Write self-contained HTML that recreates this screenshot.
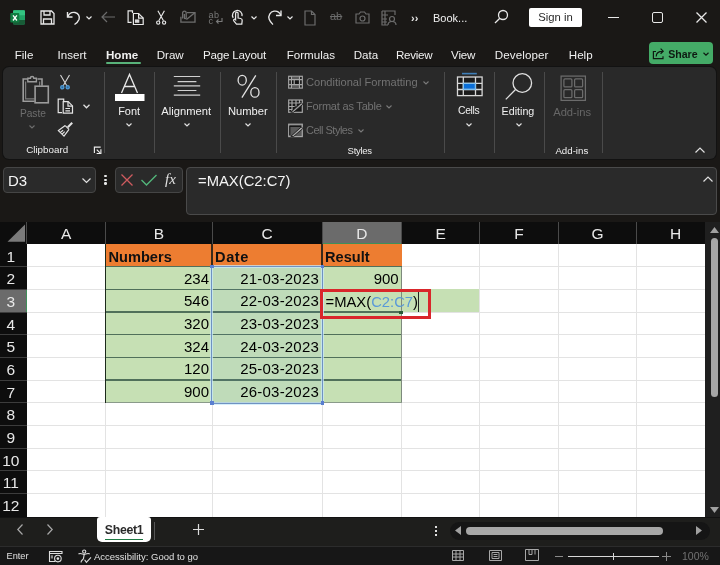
<!DOCTYPE html>
<html><head><meta charset="utf-8">
<style>
*{box-sizing:border-box;margin:0;padding:0}
html,body{width:720px;height:565px;overflow:hidden;background:#1a1816;font-family:"Liberation Sans",sans-serif;color:#fff}
.a{position:absolute}
.t{position:absolute;white-space:nowrap;line-height:1}
svg{position:absolute;overflow:visible}
#title{left:0;top:0;width:720px;height:68px;background:#1a1816}
#ribbon{left:3px;top:67px;width:713px;height:91.5px;background:#292929;border-radius:6px;box-shadow:0 0 0 1px #121212}
.sep{position:absolute;width:1px;background:#4a4a4a;top:72px;height:81px}
.rl{font-size:11.5px;color:#f0f0f0}
.gl{font-size:11.2px;color:#7a7a7a}
#grid{left:0;top:222px;width:705px;height:295px;background:#fff;overflow:hidden}
.ch{position:absolute;top:0;height:22px;background:#0c0c0c;color:#e8e8e8;font-size:15px;text-align:center;line-height:23px;border-right:1px solid #3a3a3a}
.rh{position:absolute;left:0;width:27px;background:#0c0c0c;color:#e8e8e8;font-size:15px;text-align:center;border-bottom:1px solid #3a3a3a}
.vl{position:absolute;top:22px;width:1px;height:273px;background:#dcdcdc}
.hl{position:absolute;left:27px;height:1px;width:680px;background:#dcdcdc}
.cell{position:absolute;font-size:15px;color:#000;white-space:nowrap;line-height:22px}
</style></head><body style="will-change:transform">
<div id="title" class="a"></div>

<!-- Title bar icons -->
<svg style="left:8px;top:8px" width="20" height="20" viewBox="8 8 20 20">
 <rect x="13" y="10.2" width="12" height="14.4" rx="1.3" fill="#21a366"/>
 <path d="M14.3 10.2h9.4a1.3 1.3 0 011.3 1.3v3.8H13v-3.8a1.3 1.3 0 011.3-1.3z" fill="#33c481"/>
 <path d="M13 20h12v3.3a1.3 1.3 0 01-1.3 1.3h-9.4a1.3 1.3 0 01-1.3-1.3z" fill="#185c37"/>
 <rect x="10.3" y="13" width="9" height="9.6" rx="1" fill="#107c41"/>
 <path d="M13 15.3l3.9 5.2M16.9 15.3L13 20.5" stroke="#fff" stroke-width="1.35"/>
</svg>
<svg style="left:40px;top:10px" width="15" height="15" viewBox="0 0 15 15" fill="none" stroke="#e8e8e8" stroke-width="1.3">
 <path d="M1 1h10.5l2.5 2.5V14H1z"/><path d="M4 1v4h6V1"/><path d="M3.5 14V9h8v5"/>
</svg>
<svg style="left:66px;top:10px" width="15" height="15" viewBox="0 0 15 15" fill="none" stroke="#e8e8e8" stroke-width="1.4">
 <path d="M1.5 2v5h5"/><path d="M1.8 6.8C3 3.5 6 2 9 2.5c3.5.7 5 4 4 7-1 2.5-3 4-4.5 5"/>
</svg>
<svg style="left:86px;top:15.5px" width="6" height="4" viewBox="0 0 6 4" fill="none" stroke="#e8e8e8" stroke-width="1.2"><path d="M0.5 0.5l2.5 2.5 2.5-2.5"/></svg>
<svg style="left:101px;top:11px" width="15" height="12" viewBox="0 0 15 12" fill="none" stroke="#6c6c6c" stroke-width="1.2"><path d="M14 6H1M6 1L1 6l5 5"/></svg>
<svg style="left:125px;top:8px" width="20" height="19" viewBox="125 8 20 19" fill="none" stroke="#e8e8e8" stroke-width="1.2">
 <path d="M131.6 22.4h-3.5V10.9h4.4v2.2"/><path d="M133.4 13.5h5.2l4.6 4.6v6.4h-9.8z"/><path d="M138.6 13.5v4.6h4.6"/><rect x="134.9" y="19.4" width="4.4" height="3.4" fill="#d8d8d8" stroke="none"/>
</svg>
<svg style="left:154px;top:9px" width="14" height="17" viewBox="154 9 14 17" fill="none" stroke="#e8e8e8" stroke-width="1.15">
 <path d="M157.9 10.8l5.6 9.9M164.4 10.8l-5.6 9.9"/><circle cx="158.2" cy="22.6" r="1.6"/><circle cx="164.1" cy="22.6" r="1.6"/>
</svg>
<svg style="left:178px;top:9px" width="19" height="15" viewBox="178 9 19 15" fill="none" stroke="#6e6e6e" stroke-width="1.3">
 <path d="M180.9 16.8v5.4h14.1V12.6h-8.2"/><path d="M186.4 19.6l8.4-6.8"/><path d="M182.6 18.6v-5.6a1.8 1.8 0 013.6 0v4.8a.9.9 0 01-1.8 0v-3.8"/>
</svg>
<div class="t" style="left:208.5px;top:10.6px;font-size:9px;color:#7a7a7a;letter-spacing:0.6px">ab</div>
<div class="t" style="left:208.5px;top:16.8px;font-size:9px;color:#7a7a7a">c</div>
<svg style="left:215px;top:18px" width="8" height="8" viewBox="0 0 8 8" fill="none" stroke="#7a7a7a" stroke-width="1.1"><path d="M7 0v3.5H1.5M3.5 1.5L1.5 3.5l2 2"/></svg>
<svg style="left:228px;top:8px" width="18" height="18" viewBox="228 8 18 18" fill="none" stroke="#e8e8e8" stroke-width="1.25">
 <path d="M233.2 17.8a4.8 4.8 0 118.8-1.6"/>
 <path d="M235.6 19.8v-6.3a1.25 1.25 0 012.5 0v4.5l2.6.5c1 .2 1.6 1 1.5 2l-.4 3.6h-5.3l-2.7-3.2a1 1 0 011.6-1.3z"/>
</svg>
<svg style="left:251px;top:15.5px" width="6" height="4" viewBox="0 0 6 4" fill="none" stroke="#e8e8e8" stroke-width="1.2"><path d="M0.5 0.5l2.5 2.5 2.5-2.5"/></svg>
<svg style="left:266px;top:9px" width="18" height="18" viewBox="266 9 18 18" fill="none" stroke="#e8e8e8" stroke-width="1.35">
 <path d="M281 10.5v5h-5"/><path d="M280.8 15.2c-1.3-3-4-4.4-6.8-4-3.8.6-6 4.5-4.8 8 .7 2 2.3 3.6 3.8 5.3"/>
</svg>
<svg style="left:287px;top:15.5px" width="6" height="4" viewBox="0 0 6 4" fill="none" stroke="#e8e8e8" stroke-width="1.2"><path d="M0.5 0.5l2.5 2.5 2.5-2.5"/></svg>
<svg style="left:304px;top:10px" width="12" height="16" viewBox="0 0 12 16" fill="none" stroke="#6c6c6c" stroke-width="1.2"><path d="M1 1h6.5L11 4.5V15H1z"/><path d="M7.5 1v3.5H11"/></svg>
<div class="t" style="left:330px;top:11px;font-size:11px;color:#6c6c6c;text-decoration:line-through">ab</div>
<svg style="left:355px;top:11px" width="15" height="13" viewBox="0 0 15 13" fill="none" stroke="#6c6c6c" stroke-width="1.2"><path d="M1 3h3l1.5-2h4L11 3h3v9H1z"/><circle cx="7.5" cy="7.5" r="2.5"/></svg>
<svg style="left:381px;top:10px" width="16" height="16" viewBox="0 0 16 16" fill="none" stroke="#6c6c6c" stroke-width="1.2"><path d="M1 1h13v4M1 1v14h6M4 1v14M1 5h6M1 9h5M1 12h5"/><circle cx="11" cy="9" r="2.5"/><path d="M7 15c0-2.5 2-3.5 4-3.5s4 1 4 3.5"/></svg>
<div class="t" style="left:411px;top:12.5px;font-size:11px;color:#e8e8e8;font-weight:bold">&#8250;&#8250;</div>
<div class="t" style="left:433px;top:12.6px;font-size:11px;color:#f0f0f0">Book...</div>
<svg style="left:494px;top:9px" width="15" height="15" viewBox="0 0 15 15" fill="none" stroke="#e8e8e8" stroke-width="1.3"><circle cx="9" cy="6" r="4.5"/><path d="M5.8 9.2L1 14"/></svg>
<div class="a" style="left:529px;top:8px;width:53px;height:19px;background:#fff;border-radius:2px"></div>
<div class="t" style="left:538.2px;top:12.3px;font-size:11.3px;color:#2a2a2a">Sign in</div>
<div class="a" style="left:608px;top:17px;width:11px;height:1.3px;background:#e8e8e8"></div>
<div class="a" style="left:652px;top:12px;width:11px;height:11px;border:1.3px solid #e8e8e8;border-radius:2px"></div>
<svg style="left:696px;top:12px" width="11" height="11" viewBox="0 0 11 11" fill="none" stroke="#e8e8e8" stroke-width="1.3"><path d="M0.5 0.5l10 10M10.5 0.5l-10 10"/></svg>

<!-- Menu tabs -->
<div class="t" style="left:14.7px;top:48.9px;font-size:11.6px;letter-spacing:0px;color:#f0f0f0;">File</div>
<div class="t" style="left:57.5px;top:48.9px;font-size:11.6px;letter-spacing:0px;color:#f0f0f0;">Insert</div>
<div class="t" style="left:106.0px;top:48.9px;font-size:11.6px;letter-spacing:0px;color:#f0f0f0;font-weight:bold;">Home</div>
<div class="t" style="left:156.7px;top:48.9px;font-size:11.6px;letter-spacing:0px;color:#f0f0f0;">Draw</div>
<div class="t" style="left:203.0px;top:48.9px;font-size:11.6px;letter-spacing:-0.2px;color:#f0f0f0;">Page Layout</div>
<div class="t" style="left:286.7px;top:48.9px;font-size:11.6px;letter-spacing:0px;color:#f0f0f0;">Formulas</div>
<div class="t" style="left:353.7px;top:48.9px;font-size:11.6px;letter-spacing:0px;color:#f0f0f0;">Data</div>
<div class="t" style="left:396.0px;top:48.9px;font-size:11.6px;letter-spacing:-0.3px;color:#f0f0f0;">Review</div>
<div class="t" style="left:451.1px;top:48.9px;font-size:11.6px;letter-spacing:-0.2px;color:#f0f0f0;">View</div>
<div class="t" style="left:494.8px;top:48.9px;font-size:11.6px;letter-spacing:0.1px;color:#f0f0f0;">Developer</div>
<div class="t" style="left:568.8px;top:48.9px;font-size:11.6px;letter-spacing:0px;color:#f0f0f0;">Help</div>
<div class="a" style="left:106px;top:62.3px;width:35px;height:2px;background:#58b27a;border-radius:1px"></div>
<div class="a" style="left:649px;top:42px;width:63.5px;height:22.2px;background:#44ab67;border-radius:4px"></div>
<svg style="left:650px;top:45px" width="16" height="16" viewBox="650 45 16 16" fill="none" stroke="#0e1a12" stroke-width="1.2"><path d="M656 51.5h-2.6v7.2h9.6v-2.4"/><path d="M656.2 56.5c0-3.5 2.5-5.2 6.3-5.2M660.6 48.6l2.6 2.6-2.6 2.6"/></svg>
<div class="t" style="left:668.2px;top:48.5px;font-size:10.6px;font-weight:bold;color:#0e1a12">Share</div>
<svg style="left:703px;top:51.5px" width="6" height="4" viewBox="0 0 6 4" fill="none" stroke="#0e1a12" stroke-width="1.2"><path d="M0.5 0.8l2.5 2.3 2.5-2.3"/></svg>

<!-- Ribbon -->
<div id="ribbon" class="a"></div>

<!-- Clipboard -->
<svg style="left:22px;top:74px" width="28" height="30" viewBox="0 0 28 30" fill="none" stroke="#9c9c9c" stroke-width="1.6">
 <path d="M5.5 5H1.2v22.2h11.5"/><path d="M15.5 5h4.5v6.8"/>
 <path d="M5.8 7.8V4.2h2.6a1.7 1.7 0 013.4 0h2.6v3.6z" stroke-width="1.4"/>
 <path d="M3.6 7.5v17.3h9.1M17.6 7.5v4.3" stroke="#7c7c7c" stroke-width="1.2"/>
 <rect x="13.1" y="12.2" width="13.2" height="16.6"/>
</svg>
<div class="t gl" style="left:19.9px;top:109.17px;font-size:10.2px;color:#6e6e6e;">Paste</div>
<svg style="left:29px;top:125px" width="6" height="4" viewBox="0 0 6 4" fill="none" stroke="#6e6e6e" stroke-width="1.1"><path d="M0.5 0.5l2.5 2.5 2.5-2.5"/></svg>
<svg style="left:58px;top:74px" width="14" height="16" viewBox="0 0 14 16" fill="none" stroke-width="1.1">
 <path d="M2.5 1l6.3 10.8M11.5 1L5.2 11.8" stroke="#d8d8d8"/><circle cx="4.3" cy="13.3" r="1.6" stroke="#4f9bd8" fill="#2f6a9a" stroke-width="1.3"/><circle cx="9.7" cy="13.3" r="1.6" stroke="#4f9bd8" fill="#2f6a9a" stroke-width="1.3"/>
</svg>
<svg style="left:57px;top:98px" width="17" height="16" viewBox="0 0 17 16" fill="none" stroke="#e4e4e4" stroke-width="1.2">
 <path d="M5 14.6H1.2V1.2h5.5v2"/><path d="M6.2 3.6h5l4.3 4.3v7.2H6.2z"/><path d="M11 3.6v4.5h4.5"/><path d="M8.4 10.5h4.6M8.4 12.8h4.6"/>
</svg>
<svg style="left:83px;top:104px" width="7" height="5" viewBox="0 0 7 5" fill="none" stroke="#e0e0e0" stroke-width="1.3"><path d="M0.5 0.8l3 3 3-3"/></svg>
<svg style="left:57px;top:121px" width="17" height="16" viewBox="0 0 17 16" fill="none" stroke="#e4e4e4" stroke-width="1.2">
 <path d="M15.2 1.8l-4.4 4.4" stroke-width="2"/><path d="M8.2 4.6l3.8 3.8"/><path d="M8.2 4.6L1.4 9.6l5.6 5.6 5-6.8"/><path d="M3.4 11.4l2.7-2.2M5.1 13.2l2.6-2.6"/>
</svg>
<div class="t rl" style="left:26.2px;top:145.3px;font-size:9.8px;">Clipboard</div>
<svg style="left:90px;top:142px" width="16" height="16" viewBox="90 142 16 16" fill="none" stroke="#ececec" stroke-width="1.15">
 <path d="M94.4 153V147.1h6.3"/><path d="M96.7 149.6l3.4 3.3"/><path d="M96.6 153.5h4.3v-4.3"/>
</svg>
<div class="sep" style="left:104px"></div>
<!-- Font -->
<svg style="left:115px;top:74px" width="30" height="28" viewBox="0 0 30 28" fill="none" stroke="#e8e8e8" stroke-width="1.3">
 <path d="M6.5 19L14.5 0.5 22.5 19M9.5 12.5h10"/><rect x="0" y="20" width="29.5" height="7" fill="#fff" stroke="none"/>
</svg>
<div class="t rl" style="left:118.2px;top:105.73px;font-size:10.95px;">Font</div>
<svg style="left:126px;top:123px" width="6" height="4" viewBox="0 0 6 4" fill="none" stroke="#e0e0e0" stroke-width="1.2"><path d="M0.5 0.5l2.5 2.5 2.5-2.5"/></svg>
<div class="sep" style="left:154px"></div>
<!-- Alignment -->
<svg style="left:173px;top:75px" width="28" height="22" viewBox="0 0 28 22" fill="none" stroke="#d0d0d0" stroke-width="1.15">
 <path d="M0.8 1.5h26.4M4.6 6.6h18.8M0.8 10.9h26.4M4.6 15.5h18.8M0.8 20.1h26.4"/>
</svg>
<div class="t rl" style="left:161.3px;top:105.52px;font-size:11.2px;">Alignment</div>
<svg style="left:184px;top:123px" width="6" height="4" viewBox="0 0 6 4" fill="none" stroke="#e0e0e0" stroke-width="1.2"><path d="M0.5 0.5l2.5 2.5 2.5-2.5"/></svg>
<div class="sep" style="left:220px"></div>
<!-- Number -->
<svg style="left:236px;top:74px" width="24" height="25" viewBox="236 74 24 25" fill="none" stroke="#e2e2e2" stroke-width="1.3">
 <ellipse cx="242.2" cy="80.2" rx="4.1" ry="4.9"/><ellipse cx="254.9" cy="92.4" rx="4.1" ry="4.8"/><path d="M255.8 75.3L241.9 97.6"/>
</svg>
<div class="t rl" style="left:228.0px;top:105.52px;font-size:11.2px;">Number</div>
<svg style="left:245px;top:123px" width="6" height="4" viewBox="0 0 6 4" fill="none" stroke="#e0e0e0" stroke-width="1.2"><path d="M0.5 0.5l2.5 2.5 2.5-2.5"/></svg>
<div class="sep" style="left:276px"></div>
<!-- Styles -->
<svg style="left:286px;top:74px" width="20" height="17" viewBox="286 74 20 17" fill="none" stroke="#a6a6a6" stroke-width="1.2">
 <rect x="288.7" y="76.3" width="13.6" height="11.8" fill="#141414"/>
 <rect x="291.6" y="76.8" width="7.6" height="2.6" fill="#5a5a5a" stroke="none"/><rect x="291.6" y="85" width="7.6" height="2.6" fill="#5a5a5a" stroke="none"/>
 <path d="M288.7 79.7h13.6M288.7 84.7h13.6M291.4 76.3v11.8M299.5 76.3v11.8M294.2 79.7v5"/>
</svg>
<div class="t gl" style="left:306px;top:77.2px;font-size:11.1px;color:#727272">Conditional Formatting</div>
<svg style="left:423px;top:81px" width="6" height="4" viewBox="0 0 6 4" fill="none" stroke="#7a7a7a" stroke-width="1.1"><path d="M0.5 0.5l2.5 2.5 2.5-2.5"/></svg>
<svg style="left:286px;top:97px" width="20" height="18" viewBox="286 97 20 18" fill="none" stroke="#a6a6a6" stroke-width="1.2">
 <rect x="288.7" y="100" width="13.6" height="12.3" fill="#161616"/>
 <path d="M288.7 103h13.6M288.7 106.5h6M288.7 109.5h3M292 100v12.3M296 100v6.5M299.5 100v3"/>
 <path d="M290.8 112.2l10.5-9.5 1.6 1.6-9.3 8z" fill="#9a9a9a" stroke="#1a1a1a" stroke-width="0.9"/>
</svg>
<div class="t gl" style="left:306px;top:100.9px;font-size:11px;letter-spacing:-0.2px;color:#727272">Format as Table</div>
<svg style="left:386px;top:105px" width="6" height="4" viewBox="0 0 6 4" fill="none" stroke="#7a7a7a" stroke-width="1.1"><path d="M0.5 0.5l2.5 2.5 2.5-2.5"/></svg>
<svg style="left:286px;top:121px" width="20" height="18" viewBox="286 121 20 18" fill="none" stroke="#a6a6a6" stroke-width="1.2">
 <rect x="288.7" y="124.2" width="13.6" height="12.4" fill="#5a5a5a"/>
 <path d="M289.5 126.3h11.5" stroke="#141414" stroke-width="1.3"/><path d="M289.8 126.3v9" stroke="#141414" stroke-width="1.1"/>
 <path d="M290.8 136.4l10.5-9.5 1.6 1.6-9.3 8z" fill="#a8a8a8" stroke="#1a1a1a" stroke-width="0.9"/>
</svg>
<div class="t gl" style="left:306px;top:124.8px;font-size:11px;letter-spacing:-0.5px;color:#727272">Cell Styles</div>
<svg style="left:358px;top:129px" width="6" height="4" viewBox="0 0 6 4" fill="none" stroke="#7a7a7a" stroke-width="1.1"><path d="M0.5 0.5l2.5 2.5 2.5-2.5"/></svg>
<div class="t rl" style="left:347.6px;top:145.76px;font-size:9.5px;letter-spacing:-0.3px;">Styles</div>
<div class="sep" style="left:444px"></div>
<!-- Cells -->
<svg style="left:452px;top:70px" width="36" height="30" viewBox="452 70 36 30" fill="none" stroke="#d8d8d8" stroke-width="1.3">
 <rect x="457.5" y="77" width="24.6" height="18.6" fill="#1b1b1b"/>
 <path d="M462 73.6h14.8" stroke="#3f7fb8" stroke-width="1.6"/>
 <rect x="463.3" y="83.3" width="12.2" height="6.2" fill="#0a6fd8" stroke="none"/>
 <path d="M457.5 83.3h24.6M457.5 89.5h24.6M463.3 77v18.6M475.5 77v18.6"/>
 <rect x="463.3" y="83.3" width="12.2" height="6.2" stroke="#7cc0f0" stroke-width="1.1"/>
</svg>
<div class="t rl" style="left:458.1px;top:106.20px;font-size:10.4px;letter-spacing:-0.4px;">Cells</div>
<svg style="left:466px;top:123px" width="6" height="4" viewBox="0 0 6 4" fill="none" stroke="#e0e0e0" stroke-width="1.2"><path d="M0.5 0.5l2.5 2.5 2.5-2.5"/></svg>
<div class="sep" style="left:494px"></div>
<!-- Editing -->
<svg style="left:500px;top:68px" width="40" height="34" viewBox="500 68 40 34" fill="none" stroke="#e0e0e0" stroke-width="1.3">
 <circle cx="522.3" cy="83" r="9.3"/><path d="M515.3 89.7L505.8 99.4"/>
</svg>
<div class="t rl" style="left:501.6px;top:105.94px;font-size:10.7px;">Editing</div>
<svg style="left:516px;top:123px" width="6" height="4" viewBox="0 0 6 4" fill="none" stroke="#e0e0e0" stroke-width="1.2"><path d="M0.5 0.5l2.5 2.5 2.5-2.5"/></svg>
<div class="sep" style="left:544px"></div>
<!-- Add-ins -->
<svg style="left:555px;top:70px" width="36" height="36" viewBox="555 70 36 36" fill="none" stroke="#6c6c6c" stroke-width="1.25">
 <rect x="561.1" y="76.1" width="24.3" height="24.3"/><rect x="563.9" y="78.9" width="8" height="8" rx="1"/><rect x="574.6" y="78.9" width="8" height="8" rx="1"/><rect x="563.9" y="89.7" width="8" height="8" rx="1"/><rect x="574.6" y="89.7" width="8" height="8" rx="1"/>
</svg>
<div class="t gl" style="left:553.2px;top:107.22px;font-size:11.2px;color:#666">Add-ins</div>
<div class="t rl" style="left:555.4px;top:145.79px;font-size:9.7px">Add-ins</div>
<div class="sep" style="left:602px"></div>
<svg style="left:695px;top:147px" width="10" height="6" viewBox="0 0 10 6" fill="none" stroke="#e0e0e0" stroke-width="1.2"><path d="M0.5 5.5l4.5-4.5 4.5 4.5"/></svg>

<!-- Formula bar -->
<div class="a" style="left:3px;top:167px;width:93px;height:26px;background:#2a2a2a;border:1px solid #454545;border-radius:4px"></div>
<div class="t" style="left:8px;top:173px;font-size:15px;color:#f4f4f4">D3</div>
<svg style="left:82px;top:178px" width="9" height="5" viewBox="0 0 9 5" fill="none" stroke="#e0e0e0" stroke-width="1.2"><path d="M0.5 0.5l4 4 4-4"/></svg>
<div class="a" style="left:104.4px;top:174.8px;width:2.4px;height:2.4px;background:#e8e8e8;border-radius:1.2px"></div>
<div class="a" style="left:104.4px;top:178.6px;width:2.4px;height:2.4px;background:#e8e8e8;border-radius:1.2px"></div>
<div class="a" style="left:104.4px;top:182.3px;width:2.4px;height:2.4px;background:#e8e8e8;border-radius:1.2px"></div>
<div class="a" style="left:115px;top:167px;width:68px;height:26px;background:#2a2a2a;border:1px solid #454545;border-radius:4px"></div>
<svg style="left:121px;top:174px" width="12" height="12" viewBox="0 0 12 12" fill="none" stroke="#cf5b5f" stroke-width="1.25"><path d="M0.5 0.5l11 11M11.5 0.5l-11 11"/></svg>
<svg style="left:141px;top:174px" width="16" height="12" viewBox="0 0 16 12" fill="none" stroke="#52b57a" stroke-width="1.35"><path d="M0.5 6l5 5 10-10"/></svg>
<div class="t" style="left:165px;top:172px;font-size:15px;color:#e0e0e0;font-family:'Liberation Serif',serif;font-style:italic">fx</div>
<div class="a" style="left:186px;top:167px;width:531px;height:48px;background:#2a2a2a;border:1px solid #4a4a4a;border-radius:4px"></div>
<div class="t" style="left:198px;top:174px;font-size:14.8px;color:#f4f4f4">=MAX(C2:C7)</div>
<svg style="left:703px;top:176px" width="10" height="6" viewBox="0 0 10 6" fill="none" stroke="#e0e0e0" stroke-width="1.2"><path d="M0.5 5.5l4.5-4.5 4.5 4.5"/></svg>
<div class="a" style="left:27px;top:244px;width:678px;height:273px;background:#fff"></div>
<div class="a" style="left:105.0px;top:244px;width:1px;height:273px;background:#e3e3e3"></div>
<div class="a" style="left:211.5px;top:244px;width:1px;height:273px;background:#e3e3e3"></div>
<div class="a" style="left:321.5px;top:244px;width:1px;height:273px;background:#e3e3e3"></div>
<div class="a" style="left:401.2px;top:244px;width:1px;height:273px;background:#e3e3e3"></div>
<div class="a" style="left:479.0px;top:244px;width:1px;height:273px;background:#e3e3e3"></div>
<div class="a" style="left:558.1px;top:244px;width:1px;height:273px;background:#e3e3e3"></div>
<div class="a" style="left:635.9px;top:244px;width:1px;height:273px;background:#e3e3e3"></div>
<div class="a" style="left:27px;top:266.17px;width:678px;height:1px;background:#e3e3e3"></div>
<div class="a" style="left:27px;top:288.83px;width:678px;height:1px;background:#e3e3e3"></div>
<div class="a" style="left:27px;top:311.50px;width:678px;height:1px;background:#e3e3e3"></div>
<div class="a" style="left:27px;top:334.17px;width:678px;height:1px;background:#e3e3e3"></div>
<div class="a" style="left:27px;top:356.84px;width:678px;height:1px;background:#e3e3e3"></div>
<div class="a" style="left:27px;top:379.50px;width:678px;height:1px;background:#e3e3e3"></div>
<div class="a" style="left:27px;top:402.17px;width:678px;height:1px;background:#e3e3e3"></div>
<div class="a" style="left:27px;top:424.84px;width:678px;height:1px;background:#e3e3e3"></div>
<div class="a" style="left:27px;top:447.50px;width:678px;height:1px;background:#e3e3e3"></div>
<div class="a" style="left:27px;top:470.17px;width:678px;height:1px;background:#e3e3e3"></div>
<div class="a" style="left:27px;top:492.84px;width:678px;height:1px;background:#e3e3e3"></div>
<div class="a" style="left:0;top:222px;width:705px;height:22px;background:#0d0d0d"></div>
<div class="a" style="left:0;top:244px;width:27px;height:273px;background:#0d0d0d"></div>
<div class="a" style="left:322px;top:222px;width:79.7px;height:22px;background:#6b6b6b"></div>
<div class="a" style="left:322px;top:242.5px;width:79.7px;height:1.5px;background:#3f8f5a"></div>
<div class="a" style="left:0;top:289.33px;width:27px;height:22.67px;background:#6b6b6b"></div>
<div class="a" style="left:25.5px;top:289.33px;width:1.5px;height:22.67px;background:#3f8f5a"></div>
<div class="a" style="left:105.0px;top:222px;width:1px;height:22px;background:#4a4a4a"></div>
<div class="a" style="left:211.5px;top:222px;width:1px;height:22px;background:#4a4a4a"></div>
<div class="a" style="left:321.5px;top:222px;width:1px;height:22px;background:#4a4a4a"></div>
<div class="a" style="left:401.2px;top:222px;width:1px;height:22px;background:#4a4a4a"></div>
<div class="a" style="left:479.0px;top:222px;width:1px;height:22px;background:#4a4a4a"></div>
<div class="a" style="left:558.1px;top:222px;width:1px;height:22px;background:#4a4a4a"></div>
<div class="a" style="left:635.9px;top:222px;width:1px;height:22px;background:#4a4a4a"></div>
<div class="a" style="left:0;top:266.17px;width:27px;height:1px;background:#3c3c3c"></div>
<div class="a" style="left:0;top:288.83px;width:27px;height:1px;background:#3c3c3c"></div>
<div class="a" style="left:0;top:311.50px;width:27px;height:1px;background:#3c3c3c"></div>
<div class="a" style="left:0;top:334.17px;width:27px;height:1px;background:#3c3c3c"></div>
<div class="a" style="left:0;top:356.84px;width:27px;height:1px;background:#3c3c3c"></div>
<div class="a" style="left:0;top:379.50px;width:27px;height:1px;background:#3c3c3c"></div>
<div class="a" style="left:0;top:402.17px;width:27px;height:1px;background:#3c3c3c"></div>
<div class="a" style="left:0;top:424.84px;width:27px;height:1px;background:#3c3c3c"></div>
<div class="a" style="left:0;top:447.50px;width:27px;height:1px;background:#3c3c3c"></div>
<div class="a" style="left:0;top:470.17px;width:27px;height:1px;background:#3c3c3c"></div>
<div class="a" style="left:0;top:492.84px;width:27px;height:1px;background:#3c3c3c"></div>
<svg style="left:7px;top:224px" width="19" height="19" viewBox="0 0 19 19"><path d="M18 0.5V17.8H0.5z" fill="#7a7a7a"/></svg>
<div class="a" style="left:26px;top:222px;width:1px;height:22px;background:#4a4a4a"></div>
<div class="t" style="left:46.2px;width:40px;text-align:center;top:225.8px;font-size:15.5px;color:#e8e8e8">A</div>
<div class="t" style="left:138.8px;width:40px;text-align:center;top:225.8px;font-size:15.5px;color:#e8e8e8">B</div>
<div class="t" style="left:247.0px;width:40px;text-align:center;top:225.8px;font-size:15.5px;color:#e8e8e8">C</div>
<div class="t" style="left:341.9px;width:40px;text-align:center;top:225.8px;font-size:15.5px;color:#e8e8e8">D</div>
<div class="t" style="left:420.6px;width:40px;text-align:center;top:225.8px;font-size:15.5px;color:#e8e8e8">E</div>
<div class="t" style="left:499.0px;width:40px;text-align:center;top:225.8px;font-size:15.5px;color:#e8e8e8">F</div>
<div class="t" style="left:577.5px;width:40px;text-align:center;top:225.8px;font-size:15.5px;color:#e8e8e8">G</div>
<div class="t" style="left:655.7px;width:40px;text-align:center;top:225.8px;font-size:15.5px;color:#e8e8e8">H</div>
<div class="t" style="left:-9.2px;width:40px;text-align:center;top:248.5px;font-size:15.5px;color:#e8e8e8">1</div>
<div class="t" style="left:-9.2px;width:40px;text-align:center;top:271.2px;font-size:15.5px;color:#e8e8e8">2</div>
<div class="t" style="left:-9.2px;width:40px;text-align:center;top:293.8px;font-size:15.5px;color:#e8e8e8">3</div>
<div class="t" style="left:-9.2px;width:40px;text-align:center;top:316.5px;font-size:15.5px;color:#e8e8e8">4</div>
<div class="t" style="left:-9.2px;width:40px;text-align:center;top:339.2px;font-size:15.5px;color:#e8e8e8">5</div>
<div class="t" style="left:-9.2px;width:40px;text-align:center;top:361.8px;font-size:15.5px;color:#e8e8e8">6</div>
<div class="t" style="left:-9.2px;width:40px;text-align:center;top:384.5px;font-size:15.5px;color:#e8e8e8">7</div>
<div class="t" style="left:-9.2px;width:40px;text-align:center;top:407.2px;font-size:15.5px;color:#e8e8e8">8</div>
<div class="t" style="left:-9.2px;width:40px;text-align:center;top:429.8px;font-size:15.5px;color:#e8e8e8">9</div>
<div class="t" style="left:-9.2px;width:40px;text-align:center;top:452.5px;font-size:15.5px;color:#e8e8e8">10</div>
<div class="t" style="left:-9.2px;width:40px;text-align:center;top:475.2px;font-size:15.5px;color:#e8e8e8">11</div>
<div class="t" style="left:-9.2px;width:40px;text-align:center;top:497.8px;font-size:15.5px;color:#e8e8e8">12</div>
<div class="a" style="left:105.5px;top:244.00px;width:296.2px;height:22.67px;background:#ed7d31"></div>
<div class="a" style="left:105.5px;top:266.67px;width:296.2px;height:136.00px;background:#c6e0b4"></div>
<div class="a" style="left:401.7px;top:289.33px;width:77.8px;height:22.67px;background:#c6e0b4"></div>
<div class="a" style="left:105.5px;top:266.07px;width:296.2px;height:1.4px;background:#50705a"></div>
<div class="a" style="left:105.5px;top:288.73px;width:296.2px;height:1.4px;background:#50705a"></div>
<div class="a" style="left:105.5px;top:311.40px;width:296.2px;height:1.4px;background:#50705a"></div>
<div class="a" style="left:105.5px;top:334.07px;width:296.2px;height:1.4px;background:#50705a"></div>
<div class="a" style="left:105.5px;top:356.74px;width:296.2px;height:1.4px;background:#50705a"></div>
<div class="a" style="left:105.5px;top:379.40px;width:296.2px;height:1.4px;background:#50705a"></div>
<div class="a" style="left:104.8px;top:244.00px;width:1.2px;height:158.67px;background:#1c2a1c"></div>
<div class="a" style="left:211.25px;top:244.00px;width:1.5px;height:22.67px;background:#3a2a1a"></div>
<div class="a" style="left:321.25px;top:244.00px;width:1.5px;height:22.67px;background:#3a2a1a"></div>
<div class="a" style="left:400.5px;top:266.67px;width:1.5px;height:136px;background:#7d8a7d"></div>
<div class="a" style="left:105.5px;top:401.67px;width:296.2px;height:1.5px;background:#8a9a8a"></div>
<div class="a" style="left:212px;top:266.67px;width:110px;height:136px;background:rgba(100,150,255,0.07)"></div><div class="a" style="left:211px;top:265.9px;width:112px;height:138px;border:1.5px solid #6f92c2;box-shadow:0 0 0 1px rgba(200,232,248,0.75),inset 0 0 0 1px rgba(200,232,248,0.75)"></div>
<div class="a" style="left:210.00px;top:264.85px;width:3.5px;height:3.5px;background:#5a7fd0"></div><div class="a" style="left:320.50px;top:264.85px;width:3.5px;height:3.5px;background:#5a7fd0"></div><div class="a" style="left:210.00px;top:401.35px;width:3.5px;height:3.5px;background:#5a7fd0"></div><div class="a" style="left:320.50px;top:401.35px;width:3.5px;height:3.5px;background:#5a7fd0"></div>
<div class="t" style="left:108.5px;top:249.5px;font-size:14.6px;color:#111;font-weight:bold;">Numbers</div>
<div class="t" style="left:215.0px;top:249.5px;font-size:14.6px;letter-spacing:0.6px;color:#111;font-weight:bold;">Date</div>
<div class="t" style="left:325.0px;top:249.5px;font-size:14.6px;color:#111;font-weight:bold;">Result</div>
<div class="t" style="left:105.5px;width:103.5px;text-align:right;top:270.7px;font-size:15px;color:#000;">234</div>
<div class="t" style="left:212.0px;width:107.0px;text-align:right;top:270.7px;font-size:15px;letter-spacing:0.2px;color:#000;">21-03-2023</div>
<div class="t" style="left:105.5px;width:103.5px;text-align:right;top:293.3px;font-size:15px;color:#000;">546</div>
<div class="t" style="left:212.0px;width:107.0px;text-align:right;top:293.3px;font-size:15px;letter-spacing:0.2px;color:#000;">22-03-2023</div>
<div class="t" style="left:105.5px;width:103.5px;text-align:right;top:316.0px;font-size:15px;color:#000;">320</div>
<div class="t" style="left:212.0px;width:107.0px;text-align:right;top:316.0px;font-size:15px;letter-spacing:0.2px;color:#000;">23-03-2023</div>
<div class="t" style="left:105.5px;width:103.5px;text-align:right;top:338.7px;font-size:15px;color:#000;">324</div>
<div class="t" style="left:212.0px;width:107.0px;text-align:right;top:338.7px;font-size:15px;letter-spacing:0.2px;color:#000;">24-03-2023</div>
<div class="t" style="left:105.5px;width:103.5px;text-align:right;top:361.3px;font-size:15px;color:#000;">120</div>
<div class="t" style="left:212.0px;width:107.0px;text-align:right;top:361.3px;font-size:15px;letter-spacing:0.2px;color:#000;">25-03-2023</div>
<div class="t" style="left:105.5px;width:103.5px;text-align:right;top:384.0px;font-size:15px;color:#000;">900</div>
<div class="t" style="left:212.0px;width:107.0px;text-align:right;top:384.0px;font-size:15px;letter-spacing:0.2px;color:#000;">26-03-2023</div>
<div class="t" style="left:322.0px;width:76.7px;text-align:right;top:270.7px;font-size:15px;color:#000;">900</div>
<div class="t" style="left:325.5px;top:294.8px;font-size:14.8px;color:#000">=MAX(<span style="color:#5a9ad8">C2:C7</span>)</div>
<div class="a" style="left:418px;top:292px;width:1px;height:20px;background:#222"></div>
<div class="a" style="left:320.2px;top:288.6px;width:110.8px;height:30px;border:3.3px solid #d9262b"></div>
<div class="a" style="left:399px;top:310.5px;width:3.5px;height:3.5px;background:#2b5a36"></div>

<!-- sheet tabs bar -->
<div class="a" style="left:0;top:517px;width:720px;height:29px;background:#1e1e1c;border-top:1px solid #121212"></div>
<svg style="left:17px;top:524px" width="6" height="11" viewBox="0 0 6 11" fill="none" stroke="#a8a8a8" stroke-width="1.2"><path d="M5.5 0.5L0.8 5.5l4.7 5"/></svg>
<svg style="left:47px;top:524px" width="6" height="11" viewBox="0 0 6 11" fill="none" stroke="#a8a8a8" stroke-width="1.2"><path d="M0.5 0.5l4.7 5-4.7 5"/></svg>
<div class="a" style="left:97.2px;top:517.3px;width:54.3px;height:24.9px;background:#fff;border-radius:3px 3px 5px 5px"></div>
<div class="t" style="left:104.8px;top:523.9px;font-size:12.3px;color:#2a2a2a;font-weight:bold;letter-spacing:-0.3px">Sheet1</div>
<div class="a" style="left:105px;top:538.5px;width:38px;height:1.5px;background:#1d7a43"></div>
<div class="a" style="left:154px;top:522px;width:1px;height:18px;background:#555"></div>
<svg style="left:193px;top:524px" width="11" height="11" viewBox="0 0 11 11" fill="none" stroke="#dcdcdc" stroke-width="1.2"><path d="M5.5 0v11M0 5.5h11"/></svg>
<div class="a" style="left:434.6px;top:526.2px;width:2.2px;height:2.2px;background:#e0e0e0"></div>
<div class="a" style="left:434.6px;top:529.9px;width:2.2px;height:2.2px;background:#e0e0e0"></div>
<div class="a" style="left:434.6px;top:533.6px;width:2.2px;height:2.2px;background:#e0e0e0"></div>
<div class="a" style="left:450px;top:522px;width:260px;height:18px;background:#151515;border-radius:9px"></div>
<svg style="left:455px;top:526px" width="6" height="9" viewBox="0 0 6 9"><path d="M6 0v9L0 4.5z" fill="#a0a0a0"/></svg>
<div class="a" style="left:466px;top:527px;width:197px;height:8px;background:#a6a6a6;border-radius:4px"></div>
<svg style="left:696px;top:526px" width="6" height="9" viewBox="0 0 6 9"><path d="M0 0v9l6-4.5z" fill="#a0a0a0"/></svg>
<!-- vertical scrollbar -->
<div class="a" style="left:705px;top:222px;width:15px;height:295px;background:#1f1f1f"></div>
<svg style="left:710px;top:226.5px" width="9" height="6" viewBox="0 0 9 6"><path d="M0 6h9L4.5 0z" fill="#a0a0a0"/></svg>
<div class="a" style="left:711px;top:238px;width:7px;height:159px;background:#a6a6a6;border-radius:3.5px"></div>
<svg style="left:710px;top:507px" width="9" height="6" viewBox="0 0 9 6"><path d="M0 0h9L4.5 6z" fill="#a0a0a0"/></svg>
<!-- status bar -->
<div class="a" style="left:0;top:545.8px;width:720px;height:19.2px;background:#171717;border-top:1px solid #2c2c2c"></div>
<div class="t" style="left:6.5px;top:552.3px;font-size:9.2px;color:#e0e0e0">Enter</div>
<svg style="left:47px;top:549px" width="18" height="16" viewBox="47 549 18 16" fill="none" stroke="#dedede" stroke-width="1.1">
 <path d="M55 561.5h-5.5v-10h12.5v2.5M49.5 553.5h12.5"/><rect x="50.8" y="555.3" width="2.2" height="3.2" fill="#888" stroke="none"/>
 <circle cx="57.9" cy="558.6" r="3.3"/><circle cx="57.9" cy="558.6" r="1.3" fill="#dedede" stroke="none"/>
</svg>
<svg style="left:76px;top:548px" width="18" height="17" viewBox="76 548 18 17" fill="none" stroke="#dedede" stroke-width="1.1">
 <circle cx="84.2" cy="551.6" r="1.6"/>
 <path d="M78.5 554c1.5-1.3 3-.2 5.6.6 2.6-.8 4.1-1.9 5.6-.6"/><path d="M84.1 555l-.6 3.3c-.5 1.7-2.8 2.2-2.4 4.2"/><path d="M84.6 559.7l1.8 2.6 4.6-5"/>
</svg>
<div class="t" style="left:94px;top:551.9px;font-size:9.5px;color:#e0e0e0">Accessibility: Good to go</div>
<svg style="left:452px;top:550px" width="12" height="11" viewBox="0 0 12 11" fill="none" stroke="#a8a8a8" stroke-width="1"><path d="M0.5 0.5h11v10h-11zM4 0.5v10M8 0.5v10M0.5 4h11M0.5 7h11"/></svg>
<svg style="left:489px;top:550px" width="13" height="11" viewBox="0 0 13 11" fill="none" stroke="#a8a8a8" stroke-width="1"><path d="M0.5 0.5h12v10h-12z"/><path d="M3 2.5h7v6H3z"/><path d="M4.5 4.5h4M4.5 6.5h4"/></svg>
<svg style="left:525px;top:549px" width="14" height="12" viewBox="0 0 14 12" fill="none" stroke="#a8a8a8" stroke-width="1"><path d="M0.5 0.5h13v11h-13zM4 0.5v5h3v-5M10 0.5v5"/></svg>
<div class="a" style="left:555px;top:556px;width:8px;height:1px;background:#8a8a8a"></div>
<div class="a" style="left:568px;top:556px;width:91px;height:1px;background:#d8d8d8"></div>
<div class="a" style="left:612.5px;top:553px;width:1px;height:7px;background:#d8d8d8"></div>
<svg style="left:662px;top:552px" width="9" height="9" viewBox="0 0 9 9" fill="none" stroke="#8a8a8a" stroke-width="1"><path d="M4.5 0v9M0 4.5h9"/></svg>
<div class="t" style="left:682px;top:551px;font-size:10.5px;color:#727272">100%</div>

</body></html>
